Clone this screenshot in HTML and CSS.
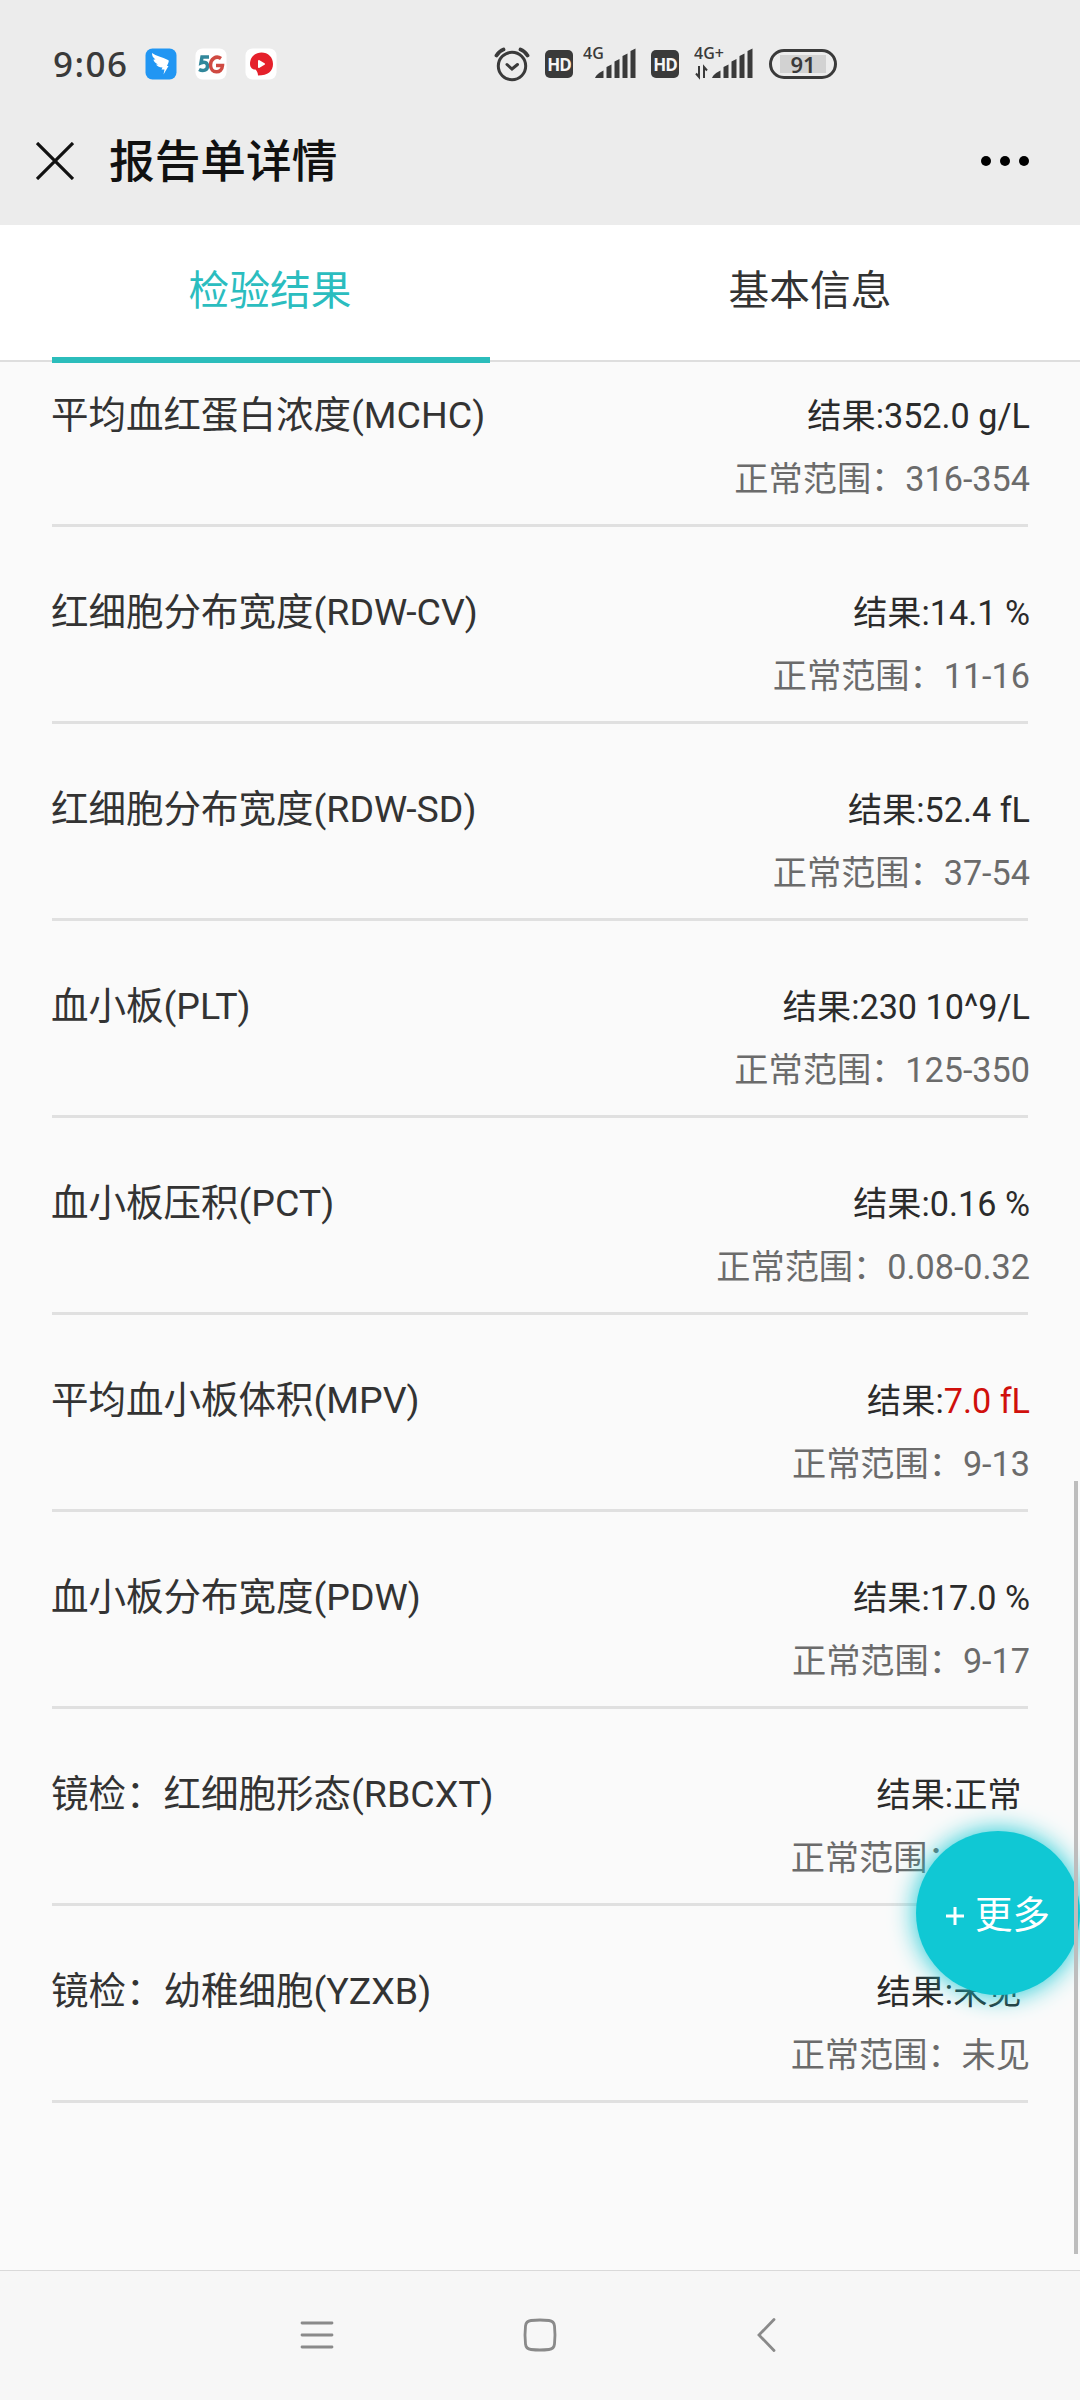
FILE: index.html
```html
<!DOCTYPE html>
<html lang="zh-CN">
<head>
  <meta charset="utf-8">
  <meta name="viewport" content="width=device-width, initial-scale=1.0">
  <title>报告单详情</title>
  <link rel="stylesheet" href="styles.css">
</head>
<body>
  <div class="status-bar">
    <span class="time">9:06</span>
    <div class="app-icons">
      <svg width="32" height="32" viewBox="0 0 32 32">
        <rect x="0.5" y="0.5" width="31" height="31" rx="7" fill="#2196f3"/>
        <path d="M7 5C11 8 17 9 23 12C24.500 12.800 23.500 14.500 22 18H23.500L18.500 26.500L19.500 21.500H16.500L17.500 19.500C14 19.500 12 18 11 16.500H13C10 15 8.500 13 8.500 11.500H10.500C8 9.500 7 8 7 5Z" fill="#fff"/>
      </svg>
      <svg width="32" height="32" viewBox="0 0 32 32">
        <rect x="0.5" y="0.5" width="31" height="31" rx="7" fill="#fff"/>
        <path d="M14 9H7L6 15C9.500 13.500 12.500 14.500 12.500 18C12.500 22.500 8 23.500 4 21.500" fill="none" stroke="#31879b" stroke-width="3.500"/>
        <path d="M26 10.500C21 7 15.500 11 15.500 17C15.500 25.500 27 26.500 27.500 17.500H21" fill="none" stroke="#cf4a42" stroke-width="3.500"/>
      </svg>
      <svg width="32" height="32" viewBox="0 0 32 32">
        <rect x="0.5" y="0.5" width="31" height="31" rx="7" fill="#fff"/>
        <path d="M5 16C5 9 10 4.500 16.500 4.500S28 9 28 16S23 27.500 13 27.500C13 25 12 23 10.500 21.500C8.500 22 5 20 5 16Z" fill="#e5202b"/>
        <path d="M14 13L19 16L14 19Z" fill="#fff" stroke="#fff" stroke-width="2" stroke-linejoin="round"/>
      </svg>
    </div>
    <div class="system-icons">
      <svg class="alarm" width="36" height="36" viewBox="0 0 36 36" fill="none" stroke="#3a3a3a" stroke-width="3" stroke-linecap="round">
        <circle cx="18" cy="20" r="13.700"/>
        <path d="M13 18.500L18 23L23.500 18.500"/>
        <path d="M2.500 9.500C4.500 6.500 6.500 4.500 9.500 3.500M33.500 9.500C31.500 6.500 29.500 4.500 26.500 3.500" stroke-width="3.800"/>
      </svg>
      <span class="hd">HD</span>
      <svg class="signal" width="54" height="44" viewBox="0 -6 54 44" fill="#3a3a3a">
        <text class="net" x="0" y="13">4G</text>
        <path d="M12 32C13 29 17 26 20.500 24.500V32ZM23.500 32V21L28.500 18.500V32ZM31.500 32V15.500L36.500 13V32ZM39.500 32V10L44.500 7.500V32ZM47.500 32V5L52.500 2.500V32Z"/>
      </svg>
      <span class="hd">HD</span>
      <svg class="signal-plus" width="60" height="44" viewBox="0 -6 60 44" fill="#3a3a3a">
        <text class="net" x="0" y="13">4G+</text>
        <path d="M5 20V31L2 27.500M10 32V21L13 24.500" fill="none" stroke="#3a3a3a" stroke-width="2"/>
        <path d="M18 32C19 29 23 26 26.500 24.500V32ZM29.500 32V21L34.500 18.500V32ZM37.500 32V15.500L42.500 13V32ZM45.500 32V10L50.500 7.500V32ZM53.500 32V5L58.500 2.500V32Z"/>
      </svg>
      <span class="battery"><span class="battery-level">91</span></span>
    </div>
  </div>

  <div class="header">
    <svg width="38" height="38" viewBox="0 0 38 38" stroke="#111" stroke-width="3.200">
      <path d="M1 1L37 37M37 1L1 37"/>
    </svg>
    <h1>报告单详情</h1>
    <svg class="more-dots" width="50" height="12" viewBox="0 0 50 12">
      <circle cx="6" cy="6" r="5"/>
      <circle cx="25" cy="6" r="5"/>
      <circle cx="44" cy="6" r="5"/>
    </svg>
  </div>

  <div class="tabs">
    <div class="tab active">检验结果</div>
    <div class="tab">基本信息</div>
  </div>

  <div class="content">
    <ul class="results">
      <li class="item">
        <span class="name">平均血红蛋白浓度(MCHC)</span>
        <div class="detail">
          <div class="value">结果:352.0 g/L</div>
          <div class="range">正常范围：316-354</div>
        </div>
      </li>
      <li class="item">
        <span class="name">红细胞分布宽度(RDW-CV)</span>
        <div class="detail">
          <div class="value">结果:14.1 %</div>
          <div class="range">正常范围：11-16</div>
        </div>
      </li>
      <li class="item">
        <span class="name">红细胞分布宽度(RDW-SD)</span>
        <div class="detail">
          <div class="value">结果:52.4 fL</div>
          <div class="range">正常范围：37-54</div>
        </div>
      </li>
      <li class="item">
        <span class="name">血小板(PLT)</span>
        <div class="detail">
          <div class="value">结果:230 10^9/L</div>
          <div class="range">正常范围：125-350</div>
        </div>
      </li>
      <li class="item">
        <span class="name">血小板压积(PCT)</span>
        <div class="detail">
          <div class="value">结果:0.16 %</div>
          <div class="range">正常范围：0.08-0.32</div>
        </div>
      </li>
      <li class="item">
        <span class="name">平均血小板体积(MPV)</span>
        <div class="detail">
          <div class="value">结果:<span class="abnormal">7.0 fL</span></div>
          <div class="range">正常范围：9-13</div>
        </div>
      </li>
      <li class="item">
        <span class="name">血小板分布宽度(PDW)</span>
        <div class="detail">
          <div class="value">结果:17.0 %</div>
          <div class="range">正常范围：9-17</div>
        </div>
      </li>
      <li class="item">
        <span class="name">镜检：红细胞形态(RBCXT)</span>
        <div class="detail">
          <div class="value">结果:正常&nbsp;</div>
          <div class="range">正常范围：正常</div>
        </div>
      </li>
      <li class="item">
        <span class="name">镜检：幼稚细胞(YZXB)</span>
        <div class="detail">
          <div class="value">结果:未见&nbsp;</div>
          <div class="range">正常范围：未见</div>
        </div>
      </li>
    </ul>
  </div>

  <div class="more-btn">
    <svg width="18" height="18" viewBox="0 0 18 18" stroke="#fff" stroke-width="3">
      <path d="M9 0V18M0 9H18"/>
    </svg>
    更多
  </div>
  <div class="scrollbar"></div>

  <div class="nav-bar">
    <svg width="34" height="34" viewBox="0 0 34 34">
      <path d="M2 5H32M2 17H32M2 29H32"/>
    </svg>
    <svg width="34" height="34" viewBox="0 0 34 34">
      <path d="M8 2.500Q17 1.500 26 2.500Q31 3 31.500 8Q32.500 17 31.500 26Q31 31 26 31.500Q17 32.500 8 31.500Q3 31 2.500 26Q1.500 17 2.500 8Q3 3 8 2.500Z"/>
    </svg>
    <svg width="34" height="34" viewBox="0 0 34 34">
      <path d="M28 1.500L13 17L28 32.500"/>
    </svg>
  </div>
</body>
</html>
```
FILE: styles.css
```css
* {
  box-sizing: border-box;
}

body {
  position: relative;
  width: 1080px;
  height: 2400px;
  margin: 0;
  overflow: hidden;
  display: flex;
  flex-direction: column;
  background: #fafafa;
  color: #333;
  font-family: Roboto, "Noto Sans CJK SC", sans-serif;
}

.status-bar {
  height: 100px;
  padding: 28px 0 0 53px;
  display: flex;
  align-items: center;
  background: #ececec;
}

.time {
  width: 92px;
  color: #3a3a3a;
  font: 500 35px/40px "Noto Sans", sans-serif;
  letter-spacing: 1.500px;
}

.app-icons {
  display: flex;
  gap: 18px;
}

.system-icons {
  display: flex;
  align-items: center;
  margin-left: 217px;
}

.hd {
  width: 28px;
  height: 28px;
  margin-left: 15px;
  border-radius: 5px;
  background: #3a3a3a;
  color: #f5f5f5;
  font: 700 17px/29px "Open Sans", sans-serif;
  text-align: center;
  letter-spacing: -1px;
}

.signal {
  margin: 0 -1px 4px 10px;
}

.signal-plus {
  margin: 0 0 4px 15px;
}

.net {
  font: 600 16px "Open Sans", sans-serif;
}

.battery {
  width: 68px;
  height: 30px;
  margin-left: 15px;
  padding: 3px 8px;
  border: 3px solid #3a3a3a;
  border-radius: 15px;
}

.battery-level {
  display: block;
  height: 18px;
  background: #d2d2d2;
  color: #3a3a3a;
  font: 600 22px/18px "Noto Sans", sans-serif;
  text-align: center;
}

.header {
  height: 125px;
  padding: 0 50px 4px 36px;
  display: flex;
  align-items: center;
  background: #ececec;
}

.header h1 {
  margin: 5px 0 0 35px;
  color: #111;
  font-size: 45.700px;
  font-weight: 500;
  line-height: 60px;
}

.more-dots {
  margin-left: auto;
}

.tabs {
  position: relative;
  height: 137px;
  display: flex;
  background: #fff;
  border-bottom: 2px solid #dedede;
}

.tab {
  position: relative;
  flex: 1;
  font-size: 40.700px;
  line-height: 132px;
  text-align: center;
}

.active {
  color: #2bbdbf;
}

.active::after {
  content: "";
  position: absolute;
  left: 52px;
  right: 50px;
  bottom: -3px;
  height: 6px;
  background: #2bbdbb;
}

.content {
  height: 1908px;
  overflow: hidden;
}

/* list is scrolled, so the first row starts under the tabs */
.results {
  margin: -32px 0 0;
  padding: 0 52px;
  list-style: none;
}

.item {
  height: 197px;
  padding-top: 55px;
  display: flex;
  justify-content: space-between;
  border-bottom: 3px solid #e0e0e0;
}

.name {
  margin-left: -1px;
  font-size: 37.500px;
  line-height: 61px;
}

.detail {
  margin-right: -2px;
  font-size: 34.200px;
  line-height: 63px;
  text-align: right;
}

.value {
  color: #2b2b2b;
}

.range {
  color: #6b6b6b;
}

.abnormal {
  color: #d0100c;
}

.more-btn {
  position: absolute;
  left: 916px;
  top: 1831px;
  width: 164px;
  height: 164px;
  display: flex;
  justify-content: center;
  align-items: center;
  gap: 11px;
  border-radius: 50%;
  background: #10c8d4;
  box-shadow: 0 0 26px #10c8d4;
  color: #fff;
  font-size: 37.500px;
  line-height: 60px;
  padding-top: 3px;
}

.more-btn svg {
  margin-top: 3px;
}

.scrollbar {
  position: absolute;
  right: 2px;
  top: 1481px;
  width: 4px;
  height: 773px;
  background: #bdbdbd;
}

.nav-bar {
  flex: 1;
  padding-bottom: 2px;
  display: flex;
  justify-content: center;
  align-items: center;
  gap: 189px;
  background: #f7f7f7;
  border-top: 1px solid #dadada;
}

.nav-bar svg {
  fill: none;
  stroke: #8a8a8a;
  stroke-width: 2.800;
  stroke-linecap: round;
}
```
